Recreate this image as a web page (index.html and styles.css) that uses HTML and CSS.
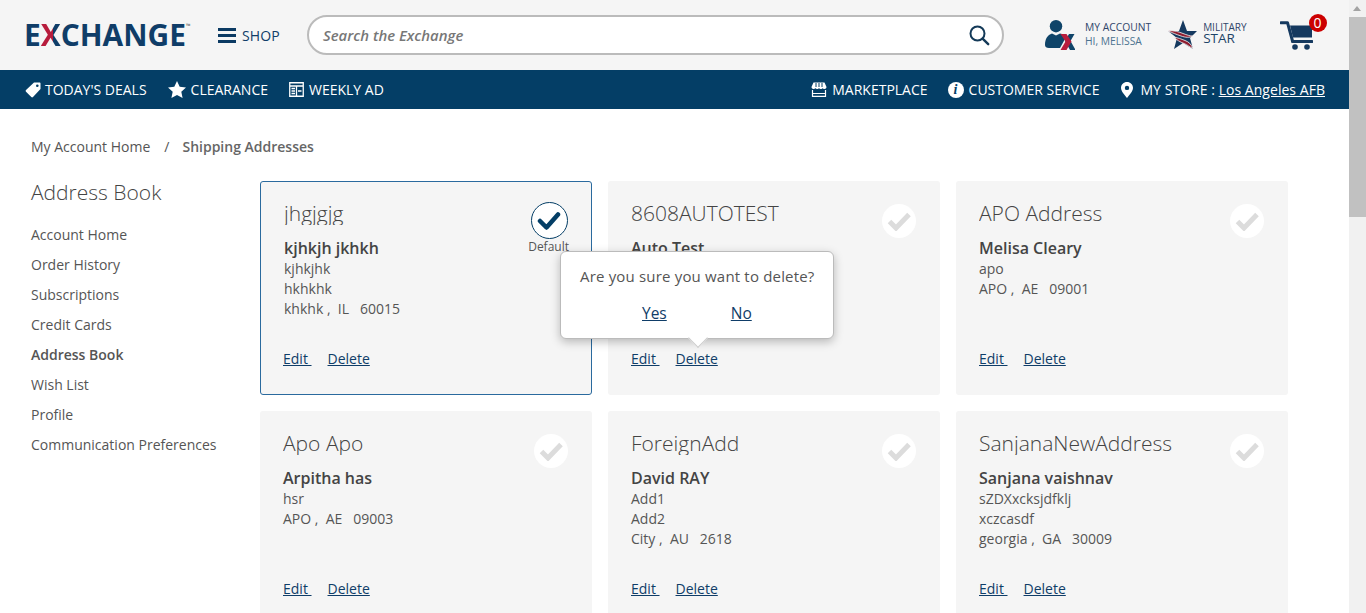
FILE: index.html
```html
<!DOCTYPE html>
<html lang="en">
<head>
<meta charset="utf-8">
<title>Shipping Addresses</title>
<link rel="stylesheet" href="styles.css">
</head>
<body>
<div class="app">
<div class="page">
  <header class="top">
    <a class="logo">E<span class="logo-x">X</span>CHANGE<sup class="tm">™</sup></a>
    <a class="shop">
      <svg class="burger" width="18" height="15" viewBox="0 0 18 15"><path d="M0 0h18v3H0zM0 6h18v3H0zM0 12h18v3H0z" fill="#0b3a63"/></svg>
      <span>SHOP</span>
    </a>
    <div class="search">
      <span class="search-text">Search the Exchange</span>
      <svg width="22" height="22" viewBox="0 0 22 22"><circle cx="9.500" cy="9.500" r="7" fill="none" stroke="#143a58" stroke-width="2"/><path d="M14.600 14.600l5.600 5.600" stroke="#143a58" stroke-width="2.400" stroke-linecap="round"/></svg>
    </div>
    <div class="account">
      <svg width="30" height="30" viewBox="0 0 30 30"><circle cx="11" cy="6.200" r="6.200" fill="#0f4469"/><path d="M0 25c0-6 2.500-10 7-11.500l4 2 4-2 2 .5 3 5-5 9H4c-2.500 0-4-1-4-3z" fill="#0f4469"/><path d="M29.500 14h-5.500l-4 7 5 9h5.500l-5-9z" fill="#0f4469"/><path d="M15.500 14h6l5 7.500-5 8.500h-6l5-8.500z" fill="#b71c3c"/></svg>
      <div class="account-text"><span>MY ACCOUNT</span><span class="hi">HI, MELISSA</span></div>
    </div>
    <div class="star">
      <svg width="30" height="30" viewBox="0 0 30 30"><path d="M15 0l4 11h10l-7 7 3 11-10-6-9 6 3-11-9-7h11z" fill="#15395f"/><path d="M0 11c6-1 11 1 15 2.500s7 2.500 9.500 2.500c-3 2-7 1.500-11.500 0S5 13 0 11zM6 17.500c4 0 7 1.500 11 3s6 3.500 8 8c-3-1-5-3.500-9-5S9 20 6 17.500z" fill="#8f1c2f" stroke="#f5f5f5" stroke-width=".8"/></svg>
      <div class="star-text"><span>MILITARY</span><span class="star-big">STAR</span></div>
    </div>
    <div class="cart">
      <svg width="33" height="29" viewBox="0 0 33 29"><path d="M1 1.700h6.500l5 18.300" fill="none" stroke="#15395f" stroke-width="3" stroke-linecap="round" stroke-linejoin="round"/><path d="M10 4.500h22v12H13z" fill="#15395f"/><path d="M12.500 20.500H32" stroke="#15395f" stroke-width="3" stroke-linecap="round"/><circle cx="15" cy="26" r="2.800" fill="#15395f"/><circle cx="27" cy="26" r="2.800" fill="#15395f"/></svg>
      <span class="badge">0</span>
    </div>
  </header>
  <nav class="bar">
    <div class="bar-group">
      <a class="bar-item bar-deals">
        <svg width="16" height="16" viewBox="0 0 16 16"><path d="M9 .5h5.500c.6 0 1 .4 1 1V7L8 15c-.5.500-1.200.500-1.700 0L1 9.700c-.5-.5-.5-1.200 0-1.700z" fill="#fff"/><circle cx="12.300" cy="3.700" r="1.300" fill="#043e66"/></svg>
        <span>TODAY'S DEALS</span></a>
      <a class="bar-item">
        <svg width="18" height="17" viewBox="0 0 18 17"><path d="M9 0l2.700 5.800 6.300.7-4.700 4.300 1.300 6.200L9 13.900 3.400 17l1.300-6.200L0 6.500l6.300-.7z" fill="#fff"/></svg>
        <span>CLEARANCE</span></a>
      <a class="bar-item">
        <svg width="15" height="15" viewBox="0 0 15 15"><path d="M.75.75h13.500v13.500H.75zM.75 4h13.500M7.500 4v10.250M2.500 6.500h3.500M2.500 9h3.500M2.500 11.500h3.500M9 9h3.500" fill="none" stroke="#fff" stroke-width="1.300"/></svg>
        <span>WEEKLY AD</span></a>
    </div>
    <div class="bar-group">
      <a class="bar-item bar-market">
        <svg width="16" height="15" viewBox="0 0 16 15"><path d="M2.500.5h11L15.500 5c0 1.200-.9 2-2 2-.8 0-1.500-.4-1.800-1-.3.600-1 1-1.800 1S8.300 6.600 8 6c-.3.600-1 1-1.900 1s-1.500-.4-1.800-1c-.3.600-1 1-1.800 1-1.100 0-2-.8-2-2z" fill="#fff"/><path d="M1.500 8v6.300h13V8M1.500 11.500h13" fill="none" stroke="#fff" stroke-width="1.200"/><path d="M5 1v4M8 1v4M11 1v4" stroke="#043e66" stroke-width="1"/></svg>
        <span>MARKETPLACE</span></a>
      <a class="bar-item">
        <span class="info">i</span>
        <span>CUSTOMER SERVICE</span></a>
      <a class="bar-item bar-store">
        <svg width="12" height="16" viewBox="0 0 12 16"><path fill-rule="evenodd" d="M6 0c3.300 0 6 2.600 6 5.800C12 9.500 8 13.500 6 16 4 13.500 0 9.500 0 5.800 0 2.600 2.700 0 6 0zm0 3.700a2.200 2.200 0 100 4.400 2.200 2.200 0 000-4.400z" fill="#fff"/></svg>
        <span class="store-text">MY STORE : <u>Los Angeles AFB</u></span></a>
    </div>
  </nav>
  <main class="content">
    <div class="crumbs"><a>My Account Home</a><span class="sep">/</span><b>Shipping Addresses</b></div>
    <div class="columns">
      <aside class="side">
        <h2>Address Book</h2>
        <ul>
          <li>Account Home</li>
          <li>Order History</li>
          <li>Subscriptions</li>
          <li>Credit Cards</li>
          <li class="current">Address Book</li>
          <li>Wish List</li>
          <li>Profile</li>
          <li>Communication Preferences</li>
        </ul>
      </aside>
      <section class="cards">
        <article class="card selected">
          <h3>jhgjgjg</h3>
          <span class="default-mark">
            <span class="tick on"><svg width="24" height="20" viewBox="0 0 24 20"><path d="M3 10l6.500 6.500L21 3.500" fill="none" stroke="#043e66" stroke-width="4.500" stroke-linecap="round" stroke-linejoin="round"/></svg></span>
            <small>Default</small>
          </span>
          <p class="name">kjhkjh jkhkh</p>
          <p>kjhkjhk</p><p>hkhkhk</p><p>khkhk ,&nbsp; IL &nbsp; 60015</p>
          <div class="actions"><a>Edit&nbsp;</a><a>Delete</a></div>
        </article>
        <article class="card">
          <h3>8608AUTOTEST</h3>
          <span class="tick"><svg width="24" height="20" viewBox="0 0 24 20"><path d="M2.500 10.500l6.500 6.500L22 3.500" fill="none" stroke="#dcdcdc" stroke-width="5"/></svg></span>
          <p class="name">Auto Test</p>
          <div class="actions"><a>Edit&nbsp;</a><a>Delete</a></div>
          <div class="popover">
            <p>Are you sure you want to delete?</p>
            <div class="popover-links"><a>Yes</a><a>No</a></div>
          </div>
        </article>
        <article class="card">
          <h3>APO Address</h3>
          <span class="tick"><svg width="24" height="20" viewBox="0 0 24 20"><path d="M2.500 10.500l6.500 6.500L22 3.500" fill="none" stroke="#dcdcdc" stroke-width="5"/></svg></span>
          <p class="name">Melisa Cleary</p>
          <p>apo</p><p>APO ,&nbsp; AE &nbsp; 09001</p>
          <div class="actions"><a>Edit&nbsp;</a><a>Delete</a></div>
        </article>
        <article class="card">
          <h3>Apo Apo</h3>
          <span class="tick"><svg width="24" height="20" viewBox="0 0 24 20"><path d="M2.500 10.500l6.500 6.500L22 3.500" fill="none" stroke="#dcdcdc" stroke-width="5"/></svg></span>
          <p class="name">Arpitha has</p>
          <p>hsr</p><p>APO ,&nbsp; AE &nbsp; 09003</p>
          <div class="actions"><a>Edit&nbsp;</a><a>Delete</a></div>
        </article>
        <article class="card">
          <h3>ForeignAdd</h3>
          <span class="tick"><svg width="24" height="20" viewBox="0 0 24 20"><path d="M2.500 10.500l6.500 6.500L22 3.500" fill="none" stroke="#dcdcdc" stroke-width="5"/></svg></span>
          <p class="name">David RAY</p>
          <p>Add1</p><p>Add2</p><p>City ,&nbsp; AU &nbsp; 2618</p>
          <div class="actions"><a>Edit&nbsp;</a><a>Delete</a></div>
        </article>
        <article class="card">
          <h3>SanjanaNewAddress</h3>
          <span class="tick"><svg width="24" height="20" viewBox="0 0 24 20"><path d="M2.500 10.500l6.500 6.500L22 3.500" fill="none" stroke="#dcdcdc" stroke-width="5"/></svg></span>
          <p class="name">Sanjana vaishnav</p>
          <p>sZDXxcksjdfklj</p><p>xczcasdf</p><p>georgia ,&nbsp; GA &nbsp; 30009</p>
          <div class="actions"><a>Edit&nbsp;</a><a>Delete</a></div>
        </article>
      </section>
    </div>
  </main>
</div>
<div class="scrollbar">
  <span class="arrow"></span>
  <span class="thumb"></span>
</div>
</div>
</body>
</html>
```
FILE: styles.css
```css
* { box-sizing: border-box; }
html, body { margin: 0; height: 613px; overflow: hidden; }
body { font-family: "Open Sans", "Liberation Sans", sans-serif; font-size: 14px; color: #555; background: #fff; }
p, h2, h3, ul { margin: 0; padding: 0; font-weight: normal; }
ul { list-style: none; }

.app { display: flex; height: 613px; }
.page { flex: 1; min-width: 0; }

.top { height: 70px; background: #f5f5f5; display: flex; align-items: center; padding: 0 22px 0 24px; }
.logo { font-size: 29.900px; font-weight: 700; color: #0f3d68; line-height: 1; width: 194px; white-space: nowrap; }
.logo-x { color: transparent; background: linear-gradient(90deg, #b71c3c 60%, #0f3d68 60%); -webkit-background-clip: text; background-clip: text; }
.tm { font-size: 6px; font-weight: 400; vertical-align: top; line-height: 12px; color: #555; }
.shop { display: flex; align-items: center; gap: 6px; width: 89px; color: #0f3d68; font-size: 14px; letter-spacing: .1px; }
.search { width: 697px; height: 40px; border: 2px solid #bbb; border-radius: 20px; background: #fff; display: flex; align-items: center; justify-content: space-between; padding: 0 12px 0 14px; }
.search-text { font-style: italic; font-weight: 600; font-size: 14.900px; color: #777; }
.account { display: flex; align-items: center; gap: 10px; margin-left: 41px; }
.account-text { display: flex; flex-direction: column; font-size: 10.300px; line-height: 14px; color: #30456a; margin-bottom: 2px; }
.hi { color: #4c7390; }
.star { display: flex; align-items: center; gap: 5px; margin-left: 17px; }
.star-text { display: flex; flex-direction: column; font-size: 10px; line-height: 11px; color: #30456a; margin-bottom: 5px; }
.star-big { font-size: 13.500px; line-height: 11px; color: #1d4468; }
.cart { position: relative; margin-left: 33px; height: 29px; }
.badge { position: absolute; top: -7px; left: 29px; width: 18px; height: 18px; border-radius: 50%; background: #c00; color: #fff; font-size: 14px; line-height: 18px; text-align: center; }

.bar { height: 39px; background: #043e66; display: flex; align-items: center; justify-content: space-between; padding: 0 24px 0 25px; color: #fff; }
.bar-group { display: flex; align-items: center; gap: 21px; }
.bar-item { display: flex; align-items: center; gap: 5px; font-size: 14px; white-space: nowrap; }
.bar-deals { gap: 4px; }
.bar-market { gap: 5px; margin-right: -1px; }
.bar-store { gap: 7px; margin-left: 1px; }
.store-text { letter-spacing: .04px; }
.info { width: 16px; height: 16px; border-radius: 50%; background: #fff; color: #043e66; font-family: "Liberation Serif", serif; font-weight: 700; font-style: italic; font-size: 14px; line-height: 16px; text-align: center; }

.content { padding: 27px 30px 0 31px; }
.crumbs { height: 22px; line-height: 22px; font-size: 14px; }
.sep { margin: 0 13px 0 14px; }
.crumbs b { font-weight: 600; color: #666; }
.columns { display: flex; margin-top: 23px; }
.side { width: 229px; flex: none; }
.side h2 { font-size: 21px; font-weight: 300; color: #444; line-height: 22px; margin-bottom: 17px; }
.side li { height: 30px; line-height: 30px; font-size: 14px; }
.side .current { font-weight: 600; }

.cards { display: grid; grid-template-columns: repeat(3, 332px); grid-auto-rows: 214px; gap: 16px; }
.card { position: relative; background: #f5f5f5; border-radius: 3px; padding: 20px 24px 0 23px; line-height: 20px; font-size: 14px; }
.card.selected { border: 1px solid #2a6a9e; padding: 19px 24px 0 23px; }
.card h3 { font-size: 21px; font-weight: 300; color: #444; line-height: 24px; height: 24px; overflow: hidden; margin-bottom: 12px; }
.card .name { font-size: 16px; font-weight: 600; color: #444; line-height: 22px; }
.actions { position: absolute; left: 23px; top: 168px; display: flex; gap: 16px; color: #0f3d68; }
.selected .actions { left: 22px; top: 167px; }
.actions a { text-decoration: underline; }
.tick { position: absolute; right: 24px; top: 23px; width: 34px; height: 34px; border-radius: 50%; background: #fff; display: flex; align-items: center; justify-content: center; }
.tick.on { position: static; width: 37px; height: 37px; margin-left: 1px; border: 1.500px solid #043e66; }
.default-mark { position: absolute; right: 22px; top: 20px; display: flex; flex-direction: column; align-items: center; }
.default-mark small { font-size: 12px; line-height: 16px; color: #555; }

.popover { position: absolute; left: -48px; top: 70px; width: 274px; height: 88px; background: #fff; border: 1px solid #bbb; border-radius: 6px; box-shadow: 0 3px 10px rgba(0,0,0,.25); padding: 13px 0 0 19px; z-index: 2; }
.popover p { font-size: 15px; letter-spacing: .18px; line-height: 22px; }
.popover::after { content: ""; position: absolute; left: 130px; bottom: -7px; width: 13px; height: 13px; background: #fff; border-right: 1px solid #ccc; border-bottom: 1px solid #ccc; transform: rotate(45deg); }
.popover-links { display: flex; gap: 64px; margin: 15px 0 0 62px; font-size: 15.500px; line-height: 22px; color: #0f3d68; }
.popover-links a { text-decoration: underline; }

.scrollbar { width: 17px; flex: none; background: #f1f1f1; display: flex; flex-direction: column; align-items: center; }
.arrow { height: 17px; width: 100%; position: relative; }
.arrow::before { content: ""; position: absolute; left: 4px; top: 6px; border: 4.500px solid transparent; border-top: 0; border-bottom: 5px solid #a3a3a3; }
.thumb { width: 100%; height: 200px; background: #c1c1c1; }
```
